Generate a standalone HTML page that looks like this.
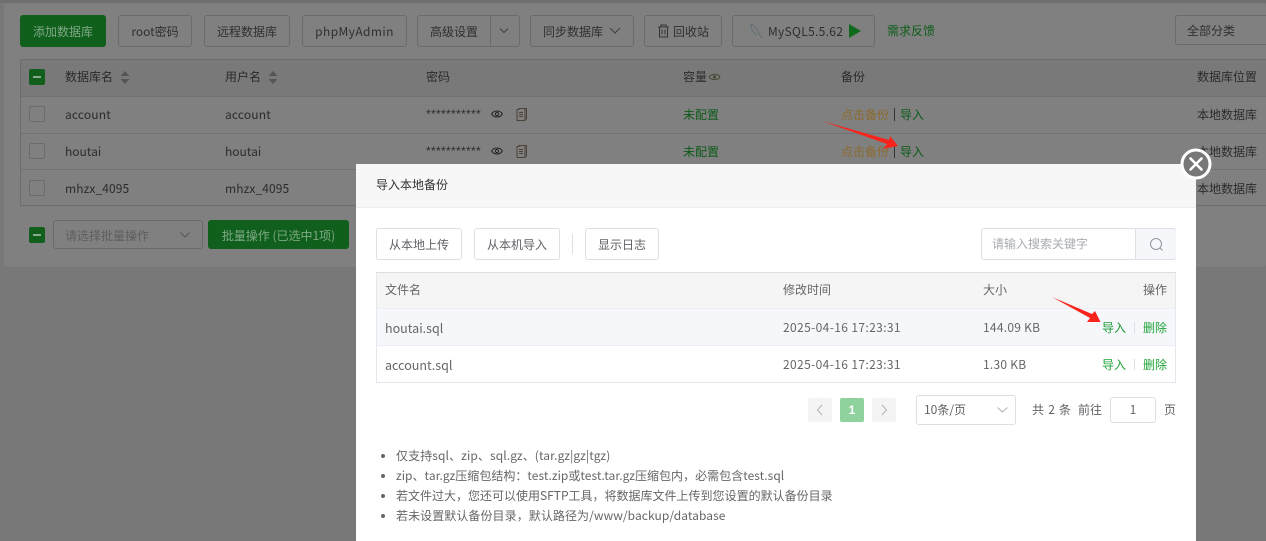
<!DOCTYPE html>
<html lang="zh">
<head>
<meta charset="utf-8">
<title>数据库</title>
<style>
html,body{margin:0;padding:0}
body{width:1266px;height:541px;overflow:hidden;position:relative;background:#787878;font-family:"Liberation Sans","Noto Sans CJK SC",sans-serif;font-size:12px;color:#2b2b2b}
.a{position:absolute;white-space:nowrap}
.b{position:absolute;box-sizing:border-box;border:1px solid #6b6b6b;border-radius:3px;text-align:center;white-space:nowrap;font-family:"Noto Sans CJK SC",sans-serif;font-size:12px;color:#2f2f2f;background:#808080;height:32px;line-height:32px;top:15px}
.g{background:#105f1c;border-color:#105f1c;color:#7fa985}
.t{position:absolute;line-height:16px;font-family:"Noto Sans CJK SC",sans-serif;font-size:12px;white-space:nowrap}
.cb{position:absolute;box-sizing:border-box;width:16px;height:16px;border:1px solid #6c6c6c;border-radius:2px;left:29px}
.cbg{background:#105f1c;border-color:#105f1c}
.cbg:after{content:"";position:absolute;left:3px;top:6px;width:8px;height:2px;background:#8aa98e}
.hl{position:absolute;left:21px;right:0;height:1px;background:#707078}
.d{position:absolute;left:356px;top:164px;width:840px;height:377px;background:#fff}
.w{position:absolute;box-sizing:border-box;background:#fff;border:1px solid #dcdfe6;border-radius:3px;text-align:center;font-family:"Noto Sans CJK SC",sans-serif;font-size:12px;color:#606266;white-space:nowrap}
.x{position:absolute;font-family:"Noto Sans CJK SC",sans-serif;font-size:12px;line-height:16px;color:#666;white-space:nowrap}
.st{position:absolute;left:426px;font-size:12px;line-height:16px;font-family:"Liberation Sans",sans-serif;letter-spacing:.33px}
</style>
</head>
<body>
<!-- page background cards -->
<div class="a" style="left:0;top:0;width:1266px;height:3px;background:#6f6f6f"></div>
<div class="a" style="left:4px;top:3px;width:1262px;height:264px;background:#808080;border-radius:3px"></div>

<!-- toolbar -->
<div class="b g" style="left:20px;width:86px">添加数据库</div>
<div class="b" style="left:118px;width:74px">root密码</div>
<div class="b" style="left:204px;width:86px">远程数据库</div>
<div class="b" style="left:302px;width:105px;letter-spacing:.4px">phpMyAdmin</div>
<div class="b" style="left:417px;width:103px;text-align:left;padding-left:12px">高级设置</div>
<div class="a" style="left:490px;top:16px;width:1px;height:30px;background:#6b6b6b"></div>
<svg class="a" style="left:498px;top:27px" width="12" height="8" viewBox="0 0 12 8"><path d="M2 1.5 6 5.5 10 1.5" fill="none" stroke="#3f3f3f" stroke-width="1"/></svg>
<div class="b" style="left:530px;width:104px;text-align:left;padding-left:12px">同步数据库</div>
<svg class="a" style="left:608px;top:27px" width="14" height="8" viewBox="0 0 14 8"><path d="M2 1 7 6 12 1" fill="none" stroke="#3f3f3f" stroke-width="1"/></svg>
<div class="b" style="left:644px;width:78px;text-align:left;padding-left:28px">回收站</div>
<svg class="a" style="left:657px;top:24px" width="13" height="14" viewBox="0 0 13 14"><path d="M1 3H12M4 3V1H9V3M2.5 3V13H10.5V3M5 5.5V10.5M8 5.5V10.5" fill="none" stroke="#333" stroke-width="1"/></svg>
<div class="b" style="left:732px;width:143px;text-align:left;padding-left:35px;letter-spacing:.3px">MySQL5.5.62</div>
<svg class="a" style="left:749px;top:23px" width="14" height="16" viewBox="0 0 14 16"><path d="M1 1C5 2 9 6 10 11L13 15M2 2C2 6 4 9 7 12" fill="none" stroke="#5a6a72" stroke-width=".9"/></svg>
<svg class="a" style="left:849px;top:23px" width="12" height="16" viewBox="0 0 12 16"><path d="M0 1 12 8 0 15Z" fill="#0f6a1c"/></svg>
<div class="t" style="left:887px;top:23px;color:#0e5e1a">需求反馈</div>
<div class="b" style="left:1175px;width:100px;top:15px;height:30px;line-height:30px;text-align:left;padding-left:11px">全部分类</div>

<!-- table -->
<div class="a" style="left:20px;top:59px;width:1246px;height:147px;box-sizing:border-box;border:1px solid #6c6c6c;border-right:0;background:#808080"></div>
<div class="a" style="left:21px;top:60px;width:1245px;height:36px;background:#797979"></div>
<div class="hl" style="top:96px"></div>
<div class="hl" style="top:133px"></div>
<div class="hl" style="top:169px"></div>
<div class="cb cbg" style="top:69px"></div>
<div class="cb" style="top:106px"></div>
<div class="cb" style="top:143px"></div>
<div class="cb" style="top:180px"></div>

<div class="t" style="left:65px;top:69px">数据库名</div>
<svg class="a" style="left:120px;top:71px" width="10" height="13" viewBox="0 0 10 13"><path d="M5 0 9.5 5H.5ZM5 13 .5 8H9.5Z" fill="#555"/></svg>
<div class="t" style="left:225px;top:69px">用户名</div>
<svg class="a" style="left:268px;top:71px" width="10" height="13" viewBox="0 0 10 13"><path d="M5 0 9.5 5H.5ZM5 13 .5 8H9.5Z" fill="#555"/></svg>
<div class="t" style="left:426px;top:69px">密码</div>
<div class="t" style="left:683px;top:69px">容量</div>
<svg class="a" style="left:708px;top:72px" width="13" height="10" viewBox="0 0 13 10"><path d="M1 5C3 1.5 10 1.5 12 5 10 8.5 3 8.5 1 5Z" fill="none" stroke="#4a4a3a"/><circle cx="6.5" cy="5" r="1.6" fill="#4a4a3a"/></svg>
<div class="t" style="left:841px;top:69px">备份</div>
<div class="t" style="left:1197px;top:69px">数据库位置</div>

<div class="t" style="left:65px;top:107px;letter-spacing:.15px">account</div>
<div class="t" style="left:225px;top:107px;letter-spacing:.15px">account</div>
<div class="t" style="left:65px;top:144px">houtai</div>
<div class="t" style="left:225px;top:144px">houtai</div>
<div class="t" style="left:65px;top:181px;letter-spacing:.1px">mhzx_4095</div>
<div class="t" style="left:225px;top:181px;letter-spacing:.1px">mhzx_4095</div>

<div class="st" style="top:106px">***********</div>
<div class="st" style="top:143px">***********</div>
<svg class="a" style="left:491px;top:109px" width="12" height="10" viewBox="0 0 12 10"><path d="M.7 5C2.5 1 9.5 1 11.3 5 9.5 9 2.5 9 .7 5Z" fill="none" stroke="#222"/><circle cx="6" cy="5" r="1.6" fill="none" stroke="#222"/></svg>
<svg class="a" style="left:491px;top:146px" width="12" height="10" viewBox="0 0 12 10"><path d="M.7 5C2.5 1 9.5 1 11.3 5 9.5 9 2.5 9 .7 5Z" fill="none" stroke="#222"/><circle cx="6" cy="5" r="1.6" fill="none" stroke="#222"/></svg>
<svg class="a" style="left:516px;top:108px" width="11" height="13" viewBox="0 0 11 13"><path d="M9 .5H3V1.5H1V12.5H9ZM9 .5H10.5V11H9M3 4.5H7M3 6.5H7M3 8.5H7" fill="none" stroke="#4c4238"/></svg>
<svg class="a" style="left:516px;top:145px" width="11" height="13" viewBox="0 0 11 13"><path d="M9 .5H3V1.5H1V12.5H9ZM9 .5H10.5V11H9M3 4.5H7M3 6.5H7M3 8.5H7" fill="none" stroke="#4c4238"/></svg>

<div class="t" style="left:683px;top:107px;color:#0c5a18">未配置</div>
<div class="t" style="left:683px;top:144px;color:#0c5a18">未配置</div>
<div class="t" style="left:841px;top:107px;color:#8c6a2e">点击备份</div>
<div class="t" style="left:841px;top:144px;color:#8c6a2e">点击备份</div>
<div class="a" style="left:894px;top:108px;width:1px;height:13px;background:#333"></div>
<div class="a" style="left:894px;top:145px;width:1px;height:13px;background:#333"></div>
<div class="t" style="left:900px;top:107px;color:#0c5a18">导入</div>
<div class="t" style="left:900px;top:144px;color:#0c5a18">导入</div>
<div class="t" style="left:1197px;top:107px">本地数据库</div>
<div class="t" style="left:1197px;top:144px">本地数据库</div>
<div class="t" style="left:1197px;top:181px">本地数据库</div>

<!-- batch bar -->
<div class="cb cbg" style="top:227px"></div>
<div class="b" style="left:53px;top:220px;width:150px;height:29px;line-height:29px;text-align:left;padding-left:11px;color:#5e5e5e">请选择批量操作</div>
<svg class="a" style="left:179px;top:231px" width="12" height="8" viewBox="0 0 12 8"><path d="M1.5 1.5 6 6 10.5 1.5" fill="none" stroke="#555"/></svg>
<div class="b g" style="left:208px;top:220px;width:141px;height:29px;line-height:29px">批量操作 (已选中1项)</div>

<!-- dialog -->
<div class="d"></div>
<div class="a" style="left:356px;top:164px;width:840px;height:43px;background:#f7f7f7;border-bottom:1px solid #eee"></div>
<div class="x" style="left:376px;top:177px;color:#333">导入本地备份</div>

<div class="w" style="left:376px;top:228px;width:86px;height:32px;line-height:32px">从本地上传</div>
<div class="w" style="left:474px;top:228px;width:86px;height:32px;line-height:32px">从本机导入</div>
<div class="a" style="left:572px;top:234px;width:1px;height:20px;background:#dcdfe6"></div>
<div class="w" style="left:585px;top:228px;width:74px;height:32px;line-height:32px">显示日志</div>

<div class="w" style="left:981px;top:228px;width:195px;height:32px;line-height:30px;text-align:left;padding-left:10px;color:#a8abb2">请输入搜索关键字</div>
<div class="a" style="left:1135px;top:229px;width:40px;height:30px;background:#f5f7fa;border-left:1px solid #dcdfe6;border-radius:0 3px 3px 0"></div>
<svg class="a" style="left:1149px;top:237px" width="15" height="15" viewBox="0 0 15 15"><circle cx="7" cy="7" r="5.5" fill="none" stroke="#909399"/><path d="M11 11 13.5 13.5" stroke="#909399"/></svg>

<div class="a" style="left:376px;top:272px;width:800px;height:111px;box-sizing:border-box;border:1px solid #e4e7ed;border-top:1px solid #ddd"></div>
<div class="a" style="left:377px;top:273px;width:798px;height:35px;background:#f5f5f5"></div>
<div class="a" style="left:377px;top:308px;width:798px;height:1px;background:#ebeef5"></div>
<div class="a" style="left:377px;top:309px;width:798px;height:36px;background:#f5f7fa"></div>
<div class="a" style="left:377px;top:345px;width:798px;height:1px;background:#ebeef5"></div>

<div class="x" style="left:385px;top:282px">文件名</div>
<div class="x" style="left:783px;top:282px">修改时间</div>
<div class="x" style="left:983px;top:282px">大小</div>
<div class="x" style="left:1143px;top:282px">操作</div>
<div class="x" style="left:385px;top:320px;font-size:12.5px">houtai.sql</div>
<div class="x" style="left:385px;top:357px;font-size:12.5px">account.sql</div>
<div class="x" style="left:783px;top:320px;letter-spacing:.37px">2025-04-16 17:23:31</div>
<div class="x" style="left:783px;top:357px;letter-spacing:.37px">2025-04-16 17:23:31</div>
<div class="x" style="left:983px;top:320px;letter-spacing:.25px">144.09 KB</div>
<div class="x" style="left:983px;top:357px;letter-spacing:.25px">1.30 KB</div>
<div class="x" style="left:1102px;top:320px;color:#1c9a35">导入</div>
<div class="x" style="left:1102px;top:357px;color:#20a53a">导入</div>
<div class="a" style="left:1134px;top:322px;width:1px;height:11px;background:#dcdfe6"></div>
<div class="a" style="left:1134px;top:359px;width:1px;height:11px;background:#dcdfe6"></div>
<div class="x" style="left:1143px;top:320px;color:#20a53a">删除</div>
<div class="x" style="left:1143px;top:357px;color:#20a53a">删除</div>

<!-- pagination -->
<div class="a" style="left:808px;top:398px;width:24px;height:24px;background:#f4f4f5;border-radius:2px"></div>
<svg class="a" style="left:816px;top:404px" width="8" height="12" viewBox="0 0 8 12"><path d="M6 1 1.5 6 6 11" fill="none" stroke="#b4b4b8"/></svg>
<div class="a" style="left:840px;top:398px;width:24px;height:24px;background:#90d29d;border-radius:2px;color:#fff;font-weight:bold;text-align:center;line-height:24px;font-size:12px">1</div>
<div class="a" style="left:872px;top:398px;width:24px;height:24px;background:#f4f4f5;border-radius:2px"></div>
<svg class="a" style="left:880px;top:404px" width="8" height="12" viewBox="0 0 8 12"><path d="M2 1 6.5 6 2 11" fill="none" stroke="#b4b4b8"/></svg>
<div class="w" style="left:916px;top:395px;width:100px;height:30px;line-height:28px;text-align:left;padding-left:7px">10条/页</div>
<svg class="a" style="left:996px;top:406px" width="13" height="8" viewBox="0 0 13 8"><path d="M1.5 1.5 6.5 6 11.5 1.5" fill="none" stroke="#a8abb2"/></svg>
<div class="x" style="left:1032px;top:402px;color:#606266;word-spacing:1.5px">共 2 条</div>
<div class="x" style="left:1078px;top:402px;color:#606266">前往</div>
<div class="w" style="left:1110px;top:397px;width:46px;height:26px;line-height:24px">1</div>
<div class="x" style="left:1164px;top:402px;color:#606266">页</div>

<!-- notes -->
<div class="a" style="left:381px;top:454px;width:4px;height:4px;border-radius:50%;background:#666"></div>
<div class="a" style="left:381px;top:474px;width:4px;height:4px;border-radius:50%;background:#666"></div>
<div class="a" style="left:381px;top:494px;width:4px;height:4px;border-radius:50%;background:#666"></div>
<div class="a" style="left:381px;top:514px;width:4px;height:4px;border-radius:50%;background:#666"></div>
<div class="x" style="left:396px;top:448px;letter-spacing:.1px">仅支持sql、zip、sql.gz、(tar.gz|gz|tgz)</div>
<div class="x" style="left:396px;top:468px;letter-spacing:.03px">zip、tar.gz压缩包结构：test.zip或test.tar.gz压缩包内，必需包含test.sql</div>
<div class="x" style="left:396px;top:488px">若文件过大，您还可以使用SFTP工具，将数据库文件上传到您设置的默认备份目录</div>
<div class="x" style="left:396px;top:508px;letter-spacing:.07px">若未设置默认备份目录，默认路径为/www/backup/database</div>

<!-- close button -->
<svg class="a" style="left:1180px;top:148px" width="32" height="32" viewBox="0 0 32 32"><circle cx="16" cy="16" r="14" fill="#777" stroke="#fff" stroke-width="3"/><path d="M10.5 10.5 21.5 21.5M21.5 10.5 10.5 21.5" stroke="#fff" stroke-width="2.6" stroke-linecap="round"/></svg>

<!-- red arrows -->
<svg class="a" style="left:0;top:0" width="1266" height="541" viewBox="0 0 1266 541"><path d="M822 121 889 140 890 136 898 146 883 149 887 144Z" fill="#f8241c"/><path d="M1052 297 1092 314 1095 311 1100.500 322 1087 322 1090 318Z" fill="#f8241c"/></svg>
</body>
</html>
